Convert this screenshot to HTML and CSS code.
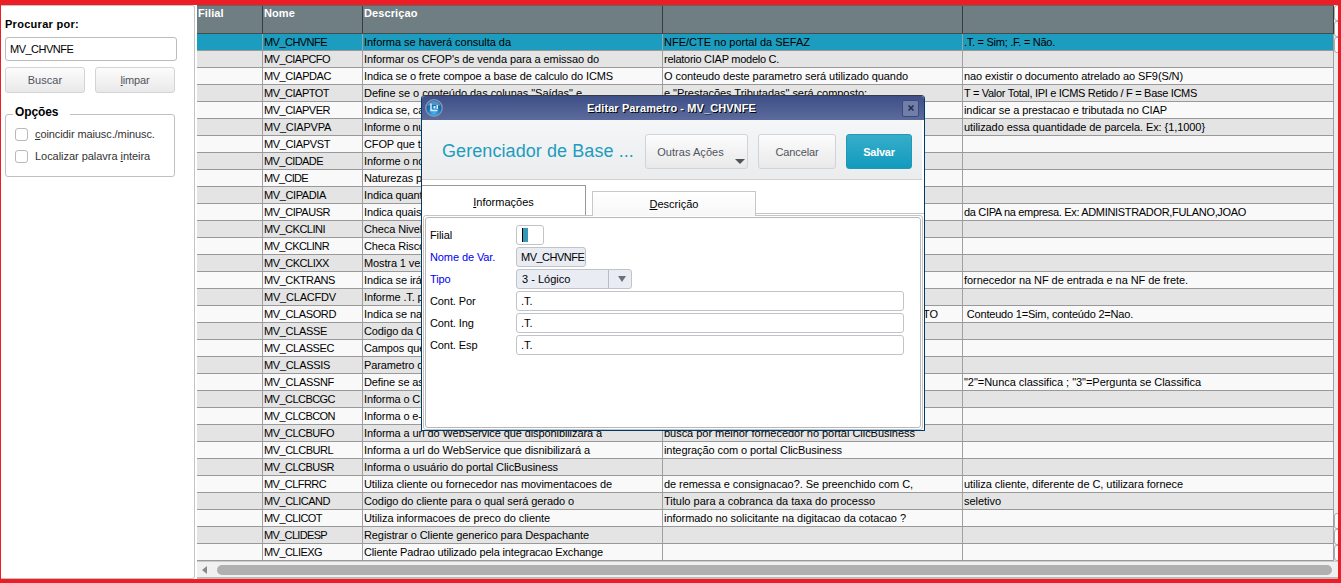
FILE: index.html
```html
<!DOCTYPE html>
<html lang="pt-BR">
<head>
<meta charset="utf-8">
<title>Editar Parametro</title>
<link rel="stylesheet" href="styles.css">
</head>
<body>
<div class="app">
  <aside class="side">
    <label class="side-title">Procurar por:</label>
    <div class="search">MV_CHVNFE</div>
    <div class="actions"><div class="btn">Buscar</div><div class="btn tight"><u>l</u>impar</div></div>
    <div class="options">
      <div class="legend">Opções</div>
      <div class="check"><i class="box"></i><span class="c1"><u>c</u>oincidir maiusc./minusc.</span></div>
      <div class="check"><i class="box"></i><span class="c2">Localizar palavra <u>i</u>nteira</span></div>
    </div>
  </aside>
  <main class="main">
    <div class="grid">
      <div class="head"><div>Filial</div><div>Nome</div><div>Descriçao</div><div></div><div></div></div>
      <div class="rows" id="rows"></div>
    </div>
    <div class="vbar">
      <div class="vgroup"><i></i><i></i><i></i></div>
      <div class="vgroup"><i></i><i></i><i></i></div>
    </div>
    <div class="hbar"><i class="arrow-left"></i><i class="thumb"></i></div>
  </main>
</div>

<section class="dialog">
  <header class="titlebar">
    <svg class="logo" viewBox="0 0 20 20" width="20" height="20">
      <defs><radialGradient id="g" cx=".5" cy=".8" r=".8"><stop offset="0" stop-color="#45b5ec"/><stop offset=".5" stop-color="#1874b8"/><stop offset="1" stop-color="#0c4783"/></radialGradient></defs>
      <circle cx="10" cy="10" r="8.2" fill="url(#g)" stroke="#8494b4" stroke-width="1.4"/>
      <path d="M3.500 8C4 4.500 7 3 10 3s6 1.500 6.500 5c-4-1.500-9-1.500-13 0z" fill="#7fb4dd" opacity=".6"/>
      <path d="M7 5.500v7h6.500" fill="none" stroke="#d4ebfa" stroke-width="1.500"/>
      <path d="M9.500 8h2v2.500h-2zM12.500 7h1.500v4h-1.500z" fill="#d9efff"/>
    </svg>
    <div class="title">Editar Parametro - MV_CHVNFE</div>
    <div class="close"><svg viewBox="0 0 8 8" width="8" height="8"><path d="M1.500 1.500l5 5M6.500 1.500l-5 5" stroke="#242f4e" stroke-width="1.700"/></svg></div>
  </header>
  <div class="toolbar">
    <div class="heading">Gerenciador de Base ...</div>
    <div class="btn big other"><span>Outras Ações</span><i class="caret"></i></div>
    <div class="btn big cancel"><span>Cancelar</span></div>
    <div class="btn big save"><span>Salvar</span></div>
  </div>
  <div class="tabs">
    <div class="tab active"><span><u>I</u>nformações</span></div>
    <div class="tab"><span><u>D</u>escrição</span></div>
    <div class="tabline"></div>
  </div>
  <div class="panel"><div class="form">
    <div class="field"><label>Filial</label><div class="input tiny"><i class="cursor"></i></div></div>
    <div class="field"><label class="req">Nome de Var.</label><div class="input var">MV_CHVNFE</div></div>
    <div class="field"><label class="req">Tipo</label><div class="input select"><span>3 - Lógico</span><i class="drop"></i></div></div>
    <div class="field"><label>Cont. Por</label><div class="input long">.T.</div></div>
    <div class="field"><label>Cont. Ing</label><div class="input long">.T.</div></div>
    <div class="field"><label>Cont. Esp</label><div class="input long">.T.</div></div>
  </div></div>
</section>
<script src="rows.js"></script>
</body>
</html>
```
FILE: styles.css
```css
* { box-sizing: border-box; }
body { margin: 0; width: 1341px; height: 583px; overflow: hidden; font: 11px/16px "Liberation Sans", Arial, sans-serif; color: #000; }
u { text-decoration: underline; text-underline-offset: 1px; }
.app { width: 1341px; height: 583px; border: solid #ee1c24; border-width: 5px 3px 4px 1px; display: flex; background: #fff; }
.side { width: 194px; height: 574px; border: 1px solid #c3c3c3; border-left: 0; border-radius: 0 3px 3px 0; padding: 11px 0 0 4px; flex: none; margin-right: 2px; }
.side-title { display: block; font-weight: bold; height: 15px; line-height: 15px; margin-bottom: 5px; letter-spacing: .28px; }
.search { width: 172px; height: 24px; border: 1px solid #bcbcbc; border-radius: 3px; line-height: 23px; padding-left: 4px; letter-spacing: -.5px; }
.actions { display: flex; gap: 10px; margin-top: 6px; }
.btn { width: 80px; height: 26px; border: 1px solid #d3d3d6; border-radius: 3px; background: linear-gradient(#fcfcfc, #e9e9e9); color: #50535e; text-align: center; line-height: 25px; letter-spacing: .05px; }
.btn.tight { letter-spacing: -.2px; }
.options { width: 170px; height: 63px; border: 1px solid #c0c0c0; border-radius: 3px; margin-top: 21px; padding-left: 9px; }
.legend { font-weight: bold; font-size: 12px; width: 57px; margin: -10px 0 1px -2px; padding-left: 2px; line-height: 15px; background: #fff; height: 17px; letter-spacing: -.1px; }
.check { display: flex; align-items: center; height: 22px; gap: 7px; color: #333; }
.c1 { letter-spacing: -.1px; }
.c2 { letter-spacing: -.04px; }
.box { width: 13px; height: 13px; border: 1px solid #b9b9b9; border-radius: 3px; }
.main { width: 1141px; height: 574px; display: grid; grid-template-columns: 1137px 4px; grid-template-rows: 556px 18px; overflow: hidden; }
.head, .row { display: grid; grid-template-columns: 66px 100px 300px 300px 371px; }
.head { height: 29px; background: #6f7e83; border-bottom: 1px solid #454c4f; border-top: 1px solid #59666a; color: #fff; font-weight: bold; }
.head div { border-right: 1px solid #353d40; padding-left: 1px; line-height: 15px; letter-spacing: .1px; }
.row { height: 17px; background: #f9f9f9; }
.row:nth-child(even) { background: #e4e4e4; }
.row:first-child { background: #1c9dbf; }
.row div { border-right: 1px solid #a0a0a0; border-bottom: 1px solid #999; padding-left: 1px; line-height: 17px; white-space: pre; overflow: hidden; }
.row .end { text-align: right; padding-right: 24px; }
.vbar { background: #ececec; display: flex; flex-direction: column; justify-content: space-between; }
.vgroup i { display: block; height: 16px; width: 8px; border: 1px solid #aaa; border-radius: 3px; background: #fafafa; }
.hbar { grid-column: 1 / 3; background: #f0f0f0; border-top: 1px solid #ccc; border-bottom: 2px solid #bbb; display: flex; align-items: center; padding-left: 5px; }
.arrow-left { border: solid transparent; border-width: 4px 5px 4px 0; border-right-color: #888; margin-right: 10px; }
.thumb { width: 1115px; height: 10px; background: #b0b0b0; border-radius: 5px; }

.dialog { position: absolute; left: 421px; top: 95px; width: 504px; height: 336px; border: 1px solid #003a66; border-top-color: #353d48; border-radius: 4px 4px 1px 1px; background: #fff; overflow: hidden; }
.titlebar { height: 24px; background: linear-gradient(#3e4f87, #5c6b9c); display: flex; align-items: center; padding: 0 5px 0 2px; }
.title { flex: 1; text-align: center; color: #fff; font-weight: bold; text-shadow: 1px 1px #000; line-height: 22px; padding-right: 3px; letter-spacing: .1px; }
.close { width: 17px; height: 17px; border: 1px solid #3c4a79; border-radius: 2px; background: #727eaa; display: flex; align-items: center; justify-content: center; }
.toolbar { height: 60px; background: linear-gradient(#f5f6f7, #ebecee); border-bottom: 1px solid #d0d0d2; display: flex; padding-left: 20px; margin-right: 2px; }
.heading { width: 203px; color: #1c9dbf; font-size: 18px; line-height: 62px; white-space: nowrap; letter-spacing: .08px; }
.big { height: 35px; margin-top: 14px; line-height: 34px; flex: none; }
.other { width: 103px; margin-right: 10px; position: relative; padding-right: 12px; }
.caret { position: absolute; right: 2px; bottom: 4px; border: solid transparent; border-width: 5px 5px 0; border-top-color: #50535e; }
.cancel { width: 78px; margin-right: 10px; letter-spacing: -.15px; }
.save { width: 66px; background: linear-gradient(#38adca, #119bbf); border-color: #2199b5; color: #fff; font-weight: bold; letter-spacing: -.25px; }
.tabs { display: flex; height: 35px; padding-top: 5px; }
.tab { width: 164px; height: 25px; margin: 6px 0 0 6px; border: 1px solid #c8c8c8; border-bottom: 0; background: linear-gradient(#fff, #f7f7f7); text-align: center; line-height: 25px; }
.tab.active { margin: 0; height: 30px; border-color: #999; border-left: 0; background: #fff; line-height: 32px; }
.tabline { flex: 1; height: 1px; margin-top: 28px; background: #c4c4c4; }
.panel { margin: 0 1px; height: 215px; border: 1px solid #c4c4c4; border-radius: 3px; padding: 1px; }
.form { height: 211px; border: 1px solid #b8b8b8; border-radius: 3px; padding: 7px 0 0 4px; }
.field { display: flex; height: 20px; margin-bottom: 2px; align-items: center; }
.field label { width: 86px; flex: none; letter-spacing: -.1px; }
.field .req { color: #0000f0; }
.input { height: 20px; border: 1px solid #c0c3c7; border-radius: 3px; padding-left: 4px; line-height: 19px; white-space: nowrap; }
.tiny { width: 28px; padding: 2px 0 0 5px; }
.cursor { display: block; width: 6px; height: 14px; border-left: 1px solid #000; background: #3797b8; }
.var { width: 70px; background: #e9ecf3; letter-spacing: -.5px; }
.select { width: 116px; background: #e9ecf3; display: flex; align-items: center; padding-left: 5px; }
.select span { width: 87px; border-right: 1px solid #b9bdc4; height: 18px; }
.drop { margin-left: 9px; border: solid transparent; border-width: 6px 4px 0; border-top-color: #6b6f7a; }
.long { width: 388px; }
```
FILE: rows.js
```js
// Each record: code, three description parts, then the text width of each in pixels (0 = default spacing).
const data = [
['MV_CHVNFE','Informa se haverá consulta da','NFE/CTE no portal da SEFAZ','.T. = Sim; .F. = Não.',63,147,146,91],
['MV_CIAPCFO',"Informar os CFOP's de venda para a emissao do",'relatorio CIAP modelo C.','',66,235,115,0],
['MV_CIAPDAC','Indica se o frete compoe a base de calculo do ICMS','O conteudo deste parametro será utilizado quando','nao existir o documento atrelado ao SF9(S/N)',67,249,244,219],
['MV_CIAPTOT','Define se o conteúdo das colunas "Saídas" e','e "Prestações Tributadas" será composto:','T = Valor Total, IPI e ICMS Retido / F = Base ICMS',65,218,203,233],
['MV_CIAPVER','Indica se, ca','','indicar se a prestacao e tributada no CIAP',66,0,0,203],
['MV_CIAPVPA','Informe o num','','utilizado essa quantidade de parcela. Ex: {1,1000}',67,0,0,241],
['MV_CIAPVST','CFOP que tem','','',66,0,0,0],
['MV_CIDADE','Informe o nom','','',59,0,0,0],
['MV_CIDE','Naturezas par','','',44,0,0,0],
['MV_CIPADIA','Indica quanto','','',62,0,0,0],
['MV_CIPAUSR','Indica quais ','','da CIPA na empresa. Ex: ADMINISTRADOR,FULANO,JOAO',66,0,0,282],
['MV_CKCLINI','Checa Nivel ','','',61,0,0,0],
['MV_CKCLINR','Checa Risco','','',65,0,0,0],
['MV_CKCLIXX','Mostra 1 vez','','',65,0,0,0],
['MV_CKTRANS','Indica se irá ','','fornecedor na NF de entrada e na NF de frete.',71,0,0,224],
['MV_CLACFDV','Informe .T. pa','','',72,0,0,0],
['MV_CLASORD','Indica se na','TO',' Conteudo 1=Sim, conteúdo 2=Nao.',72,0,0,169],
['MV_CLASSE','Codigo da Cl','','',63,0,0,0],
['MV_CLASSEC','Campos que','','',70,0,0,0],
['MV_CLASSIS','Parametro de','','',66,0,0,0],
['MV_CLASSNF','Define se as','','"2"=Nunca classifica ; "3"=Pergunta se Classifica',70,0,0,237],
['MV_CLCBCGC','Informa o CN','','',71,0,0,0],
['MV_CLCBCON','Informa o e-m','','',71,0,0,0],
['MV_CLCBUFO','Informa a url do WebService que disponibilizará a','busca por melhor fornecedor no portal ClicBusiness','',70,238,251,0],
['MV_CLCBURL','Informa a url do WebService que disnibilizará a','integração com o portal ClicBusiness','',69,226,178,0],
['MV_CLCBUSR','Informa o usuário do portal ClicBusiness','','',70,194,0,0],
['MV_CLFRRC','Utiliza cliente ou fornecedor nas movimentacoes de','de remessa e consignacao?. Se preenchido com C,','utiliza cliente, diferente de C, utilizara fornece',62,248,249,219],
['MV_CLICAND','Codigo do cliente para o qual será gerado o','Titulo para a cobranca da taxa do processo','seletivo',66,210,211,37],
['MV_CLICOT','Utiliza informacoes de preco do cliente','informado no solicitante na digitacao da cotacao ?','',58,186,242,0],
['MV_CLIDESP','Registrar o Cliente generico para Despachante','','',63,225,0,0],
['MV_CLIEXG','Cliente Padrao utilizado pela integracao Exchange','','',58,239,0,0]
];
const rows = document.getElementById('rows');
for (const record of data) {
  const row = document.createElement('div');
  row.className = 'row';
  row.append(document.createElement('div'));
  rows.append(row);
  for (let i = 0; i < 4; i++) {
    const cell = document.createElement('div');
    const text = document.createElement('span');
    text.textContent = record[i];
    if (record[i] === 'TO') cell.className = 'end';
    cell.append(text);
    row.append(cell);
    const width = record[i + 4];
    if (width) {
      const natural = text.getBoundingClientRect().width;
      text.style.letterSpacing = (width - natural) / record[i].length + 'px';
    } else if (i === 1) {
      text.style.letterSpacing = '-0.12px';
    }
  }
}
```
